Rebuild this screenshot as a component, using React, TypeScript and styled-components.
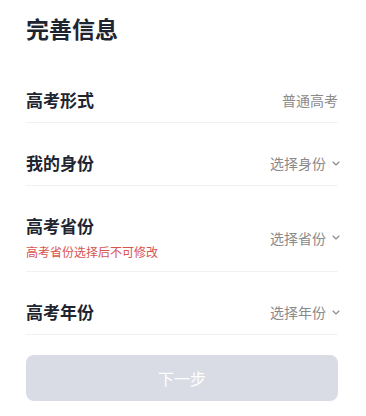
import styled, { createGlobalStyle } from "styled-components";

const GlobalStyle = createGlobalStyle`
  html, body {
    margin: 0;
    padding: 0;
    background: #ffffff;
  }
  body {
    font-family: "Noto Sans CJK SC", "Noto Sans", sans-serif;
  }
`;

const Page = styled.div`
  width: 366px;
  box-sizing: border-box;
  padding: 0 28px 0 26px;
`;

const Title = styled.h1`
  margin: 12px 0 16px;
  font-size: 23px;
  line-height: 32px;
  font-weight: 700;
  color: #1f2530;
`;

const Row = styled.div`
  display: flex;
  align-items: center;
  justify-content: space-between;
  padding: 28px 0 10px;
  border-bottom: 1px solid #f0f0f2;
`;

const LeftBox = styled.div`
  display: flex;
  flex-direction: column;
`;

const Label = styled.div`
  font-size: 17px;
  line-height: 24px;
  font-weight: 700;
  color: #1f2530;
`;

const Hint = styled.div`
  margin-top: 5px;
  font-size: 12px;
  line-height: 18px;
  color: #d9534f;
`;

const Value = styled.div<{ $arrow?: boolean }>`
  display: flex;
  align-items: center;
  gap: 6px;
  font-size: 14px;
  line-height: 20px;
  color: #8a8a8a;
  margin-right: ${(p) => (p.$arrow ? "-2px" : "0")};
`;

const NextBtn = styled.div`
  margin-top: 20px;
  height: 46px;
  border-radius: 8px;
  background-color: #d9dce5;
  color: #ffffff;
  font-size: 16px;
  display: flex;
  align-items: center;
  justify-content: center;
`;

const Chevron = () => (
  <svg width="8" height="5" viewBox="0 0 8 5" fill="none">
    <path d="M1 1l3 3 3-3" stroke="#8a8a8a" strokeWidth="1.1" strokeLinecap="round" strokeLinejoin="round" />
  </svg>
);

const rows = [
  { label: "高考形式", value: "普通高考", arrow: false },
  { label: "我的身份", value: "选择身份", arrow: true },
  { label: "高考省份", value: "选择省份", arrow: true, hint: "高考省份选择后不可修改" },
  { label: "高考年份", value: "选择年份", arrow: true },
];

const App = () => {
  return (
    <Page>
      <GlobalStyle />
      <Title>完善信息</Title>
      {rows.map((r) => (
        <Row key={r.label}>
          <LeftBox>
            <Label>{r.label}</Label>
            {r.hint && <Hint>{r.hint}</Hint>}
          </LeftBox>
          <Value $arrow={r.arrow}>
            {r.value}
            {r.arrow && <Chevron />}
          </Value>
        </Row>
      ))}
      <NextBtn>下一步</NextBtn>
    </Page>
  );
};

export default App;
